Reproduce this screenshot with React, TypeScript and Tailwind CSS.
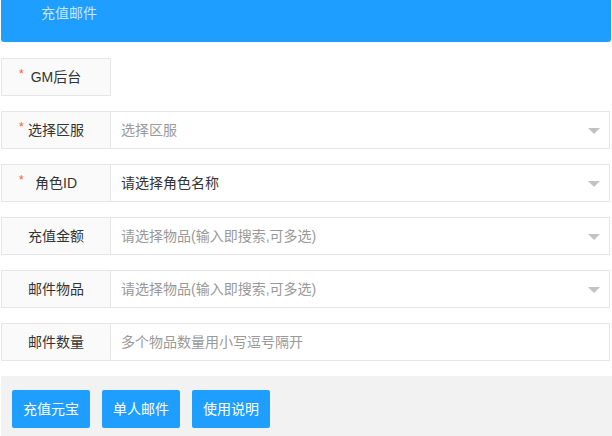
import React from "react";

const font = { fontFamily: '"Liberation Sans", "Noto Sans CJK SC", sans-serif' };

function Caret() {
  return (
    <span className="absolute right-[9px] top-[16px] w-0 h-0 border-l-[6px] border-r-[6px] border-t-[6px] border-l-transparent border-r-transparent border-t-[#c2c2c2]" />
  );
}

function Label({ label, star }: { label: string; star?: boolean }) {
  return (
    <div className="relative w-[110px] h-[38px] border border-[#e6e6e6] bg-[#FAFAFA] flex items-center justify-center text-[14px] text-[#333]">
      {star && <span className="absolute left-[17px] top-[9px] text-[#FF5722] text-[12px] leading-none">*</span>}
      <span>{label}</span>
    </div>
  );
}

function Row({
  label,
  star,
  value,
  placeholder,
  select,
}: {
  label: string;
  star?: boolean;
  value?: string;
  placeholder?: string;
  select?: boolean;
}) {
  return (
    <div className="mt-[15px] ml-[1px] w-[609px] h-[38px] flex">
      <Label label={label} star={star} />
      <div className="relative flex-1 h-full border border-l-0 border-[#e6e6e6] bg-white flex items-center pl-[10px] text-[14px]">
        {value ? <span className="text-[#333]">{value}</span> : <span className="text-[#999]">{placeholder}</span>}
        {select && <Caret />}
      </div>
    </div>
  );
}

export default function App() {
  return (
    <div className="w-[612px] h-[436px] bg-white overflow-hidden" style={font}>
      <div className="mx-[1px] h-[42px] bg-[#1E9FFF] rounded-b-[3px] pl-[40px] text-[14px] leading-[26px] text-white/75">
        充值邮件
      </div>
      <div className="mt-[16px] ml-[1px] w-[110px]">
        <Label label="GM后台" star />
      </div>
      <Row label="选择区服" star placeholder="选择区服" select />
      <Row label="角色ID" star value="请选择角色名称" select />
      <Row label="充值金额" placeholder="请选择物品(输入即搜索,可多选)" select />
      <Row label="邮件物品" placeholder="请选择物品(输入即搜索,可多选)" select />
      <Row label="邮件数量" placeholder="多个物品数量用小写逗号隔开" />
      <div className="mt-[15px] ml-[1px] h-[61px] bg-[#f2f2f2] flex gap-[12px] pl-[11px] pt-[14px]">
        {["充值元宝", "单人邮件", "使用说明"].map((t) => (
          <div key={t} className="w-[78px] h-[38px] rounded-[2px] bg-[#1E9FFF] text-white text-[14px] flex items-center justify-center">
            {t}
          </div>
        ))}
      </div>
    </div>
  );
}
